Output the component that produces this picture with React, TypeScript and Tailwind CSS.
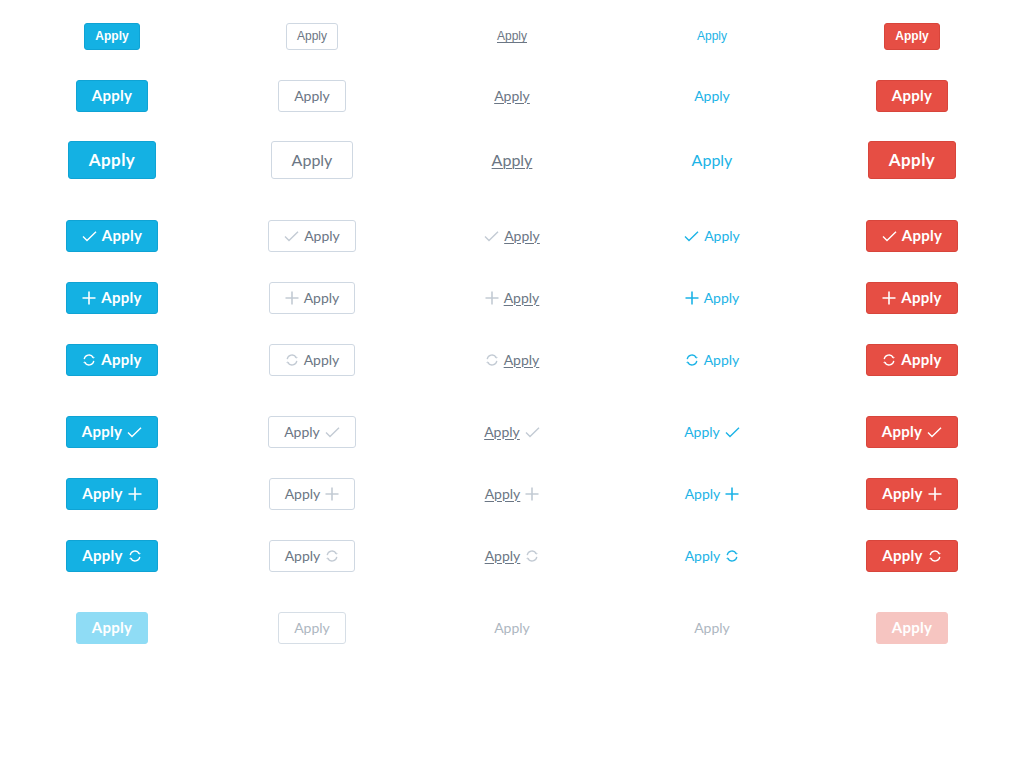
import React from 'react';

type Icon = 'check' | 'plus' | 'sync';
type Variant = 'primary' | 'outline' | 'link' | 'text' | 'danger';

function Glyph({ icon }: { icon: Icon }) {
  if (icon === 'check')
    return (
      <svg width="15" height="11" viewBox="0 0 15 11" fill="none" stroke="currentColor" strokeWidth="1.4">
        <path d="M1 5.5 L5 9.5 L14 0.8" />
      </svg>
    );
  if (icon === 'plus')
    return (
      <svg width="14" height="14" viewBox="0 0 14 14" fill="none" stroke="currentColor" strokeWidth="1.6">
        <path d="M7 0.5 V13.5 M0.5 7 H13.5" />
      </svg>
    );
  return (
    <svg width="14" height="14" viewBox="0 0 14 14" fill="none" stroke="currentColor" strokeWidth="1.3">
      <path d="M2.2 6.2 A4.9 4.9 0 0 1 11.2 4.3" />
      <path d="M11.8 7.8 A4.9 4.9 0 0 1 2.8 9.7" />
      <path d="M13 4.4 L11.2 5.6 L9.3 3.8 Z" fill="currentColor" stroke="none" />
      <path d="M1 9.6 L2.8 8.4 L4.7 10.2 Z" fill="currentColor" stroke="none" />
    </svg>
  );
}

const boxCls: Record<Variant, string> = {
  primary: 'bg-[#14b1e3] border border-[#0fa3d4] text-white font-bold rounded-[3px]',
  outline: 'bg-white border border-[#cfd8e2] text-[#6b7684] rounded-[3px]',
  link: 'text-[#6b7684]',
  text: 'text-[#1cb3e6]',
  danger: 'bg-[#e64e44] border border-[#d8453b] text-white font-bold rounded-[3px]',
};

const iconColor: Record<Variant, string> = {
  primary: 'text-white',
  outline: 'text-[#c3cbd4]',
  link: 'text-[#c3cbd4]',
  text: 'text-[#1cb3e6]',
  danger: 'text-white',
};

const variants: Variant[] = ['primary', 'outline', 'link', 'text', 'danger'];

function Btn({ v, size, icon, side }: { v: Variant; size: 'sm' | 'md' | 'lg'; icon?: Icon; side?: 'left' | 'right' }) {
  const boxed = v === 'primary' || v === 'outline' || v === 'danger';
  const bold = v === 'primary' || v === 'danger';
  let sizeCls = '';
  if (size === 'sm') sizeCls = `text-[12px] font-['Liberation_Sans',sans-serif] ${boxed ? 'h-[27px] px-[10px]' : ''}`;
  else if (size === 'lg') sizeCls = `${bold ? 'text-[17px] tracking-[0.4px]' : 'text-[16px]'} ${boxed ? 'h-[38px] px-[20px]' : ''}`;
  else sizeCls = `${bold ? 'text-[15px] tracking-[0.3px]' : 'text-[14px]'} ${boxed ? 'h-[32px] px-[15px]' : ''}`;
  const pad = size === 'sm' ? '' : bold ? 'leading-none pb-[2px]' : 'leading-none pb-[1px]';
  const label = (
    <span className={`${pad} ${v === 'link' ? 'underline underline-offset-[2px] decoration-1' : ''}`}>Apply</span>
  );
  const ic = icon ? (
    <span className={`flex items-center ${iconColor[v]}`}>
      <Glyph icon={icon} />
    </span>
  ) : null;
  return (
    <button className={`flex items-center gap-[5px] ${boxCls[v]} ${sizeCls}`}>
      {side === 'left' && ic}
      {label}
      {side === 'right' && ic}
    </button>
  );
}

const dis: Record<Variant, string> = {
  primary: 'bg-[#8fdcf5] border border-[#8fdcf5] text-white font-bold text-[15px] tracking-[0.3px] rounded-[3px] h-[32px] px-[15px]',
  outline: 'bg-white border border-[#d6dee6] text-[#adb7c1] text-[14px] rounded-[3px] h-[32px] px-[15px]',
  link: 'text-[#adb7c1] text-[14px]',
  text: 'text-[#adb7c1] text-[14px]',
  danger: 'bg-[#f6c5c1] border border-[#f6c5c1] text-white font-bold text-[15px] tracking-[0.3px] rounded-[3px] h-[32px] px-[15px]',
};

function Row({ h, children }: { h: string; children: React.ReactNode }) {
  return <div className={`grid grid-cols-5 items-center justify-items-center ${h}`}>{children}</div>;
}

export default function App() {
  const icons: Icon[] = ['check', 'plus', 'sync'];
  return (
    <div className="min-h-screen bg-white font-['Lato',sans-serif] px-[12px] pt-[5px] w-[1024px]">
      <Row h="h-[62px]">{variants.map((v) => <Btn key={v} v={v} size="sm" />)}</Row>
      <Row h="h-[58px]">{variants.map((v) => <Btn key={v} v={v} size="md" />)}</Row>
      <Row h="h-[70px]">{variants.map((v) => <Btn key={v} v={v} size="lg" />)}</Row>
      <div className="mt-[10px]">
        {icons.map((ic) => (
          <Row key={ic} h="h-[62px]">{variants.map((v) => <Btn key={v} v={v} size="md" icon={ic} side="left" />)}</Row>
        ))}
      </div>
      <div className="mt-[10px]">
        {icons.map((ic) => (
          <Row key={ic} h="h-[62px]">{variants.map((v) => <Btn key={v} v={v} size="md" icon={ic} side="right" />)}</Row>
        ))}
      </div>
      <div className="mt-[10px]">
        <Row h="h-[62px]">
          {variants.map((v) => (
            <button key={v} className={`flex items-center ${dis[v]}`}>
              <span className={`leading-none ${v === 'primary' || v === 'danger' ? 'pb-[2px]' : 'pb-[1px]'}`}>Apply</span>
            </button>
          ))}
        </Row>
      </div>
    </div>
  );
}
